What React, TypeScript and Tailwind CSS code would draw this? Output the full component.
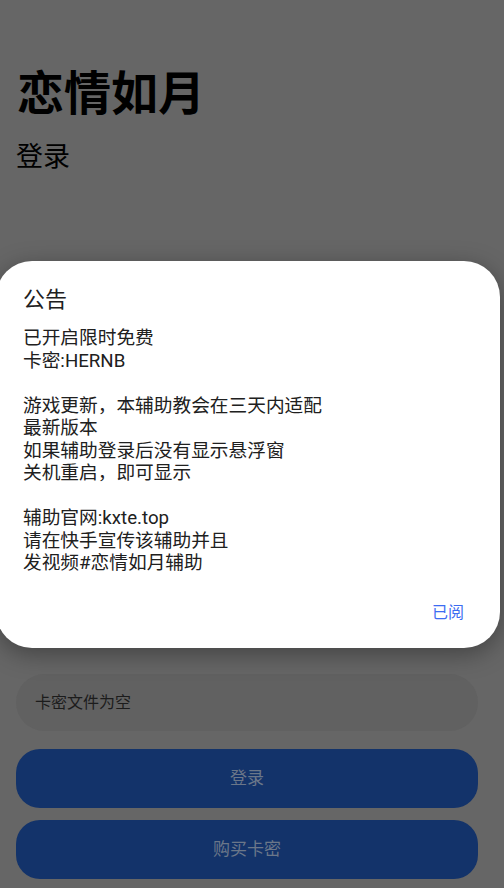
import React from "react";

const font = { fontFamily: '"Roboto", "Noto Sans CJK SC", sans-serif' };

export default function App() {
  const lines1 = ["已开启限时免费", "卡密:HERNB"];
  const lines2 = ["游戏更新，本辅助教会在三天内适配", "最新版本", "如果辅助登录后没有显示悬浮窗", "关机重启，即可显示"];
  const lines3 = ["辅助官网:kxte.top", "请在快手宣传该辅助并且", "发视频#恋情如月辅助"];
  return (
    <div className="relative w-[504px] h-[888px] overflow-hidden bg-[#666666]" style={font}>
      <div className="flex flex-col pl-4 pr-[26px]">
        <div className="pt-[64px] pl-[1px] text-[47px] leading-[60px] font-bold text-black">恋情如月</div>
        <div className="mt-[15px] text-[27px] leading-[36px] text-black">登录</div>
        <div className="mt-[499px] h-[57px] rounded-full bg-[#616161] flex items-center pl-[19px] text-[16px] text-[#1c1c1c]">
          卡密文件为空
        </div>
        <div className="mt-[18px] h-[59px] rounded-[24px] bg-[#13336a] flex items-center justify-center text-[17px] text-[#6b7789]">
          登录
        </div>
        <div className="mt-[12px] h-[59px] rounded-[24px] bg-[#13336a] flex items-center justify-center text-[17px] text-[#6b7789]">
          购买卡密
        </div>
      </div>

      <div className="absolute left-[-4px] top-[261px] w-[504px] h-[387px] rounded-[36px] bg-white shadow-[0_6px_24px_rgba(0,0,0,0.35)] flex flex-col pl-[27px] pr-[36px]">
        <div className="mt-[24px] text-[22px] leading-[30px] text-[#202020]">公告</div>
        <div className="mt-[12px] text-[18.7px] leading-[22.5px] text-[#202020]">
          {lines1.map((l) => (
            <div key={l}>{l}</div>
          ))}
          <div className="h-[22.5px]" />
          {lines2.map((l) => (
            <div key={l}>{l}</div>
          ))}
          <div className="h-[22.5px]" />
          {lines3.map((l) => (
            <div key={l}>{l}</div>
          ))}
        </div>
        <div className="mt-auto mb-[24px] self-end text-[16px] leading-[22px] text-[#3d6cf2]">已阅</div>
      </div>
    </div>
  );
}
